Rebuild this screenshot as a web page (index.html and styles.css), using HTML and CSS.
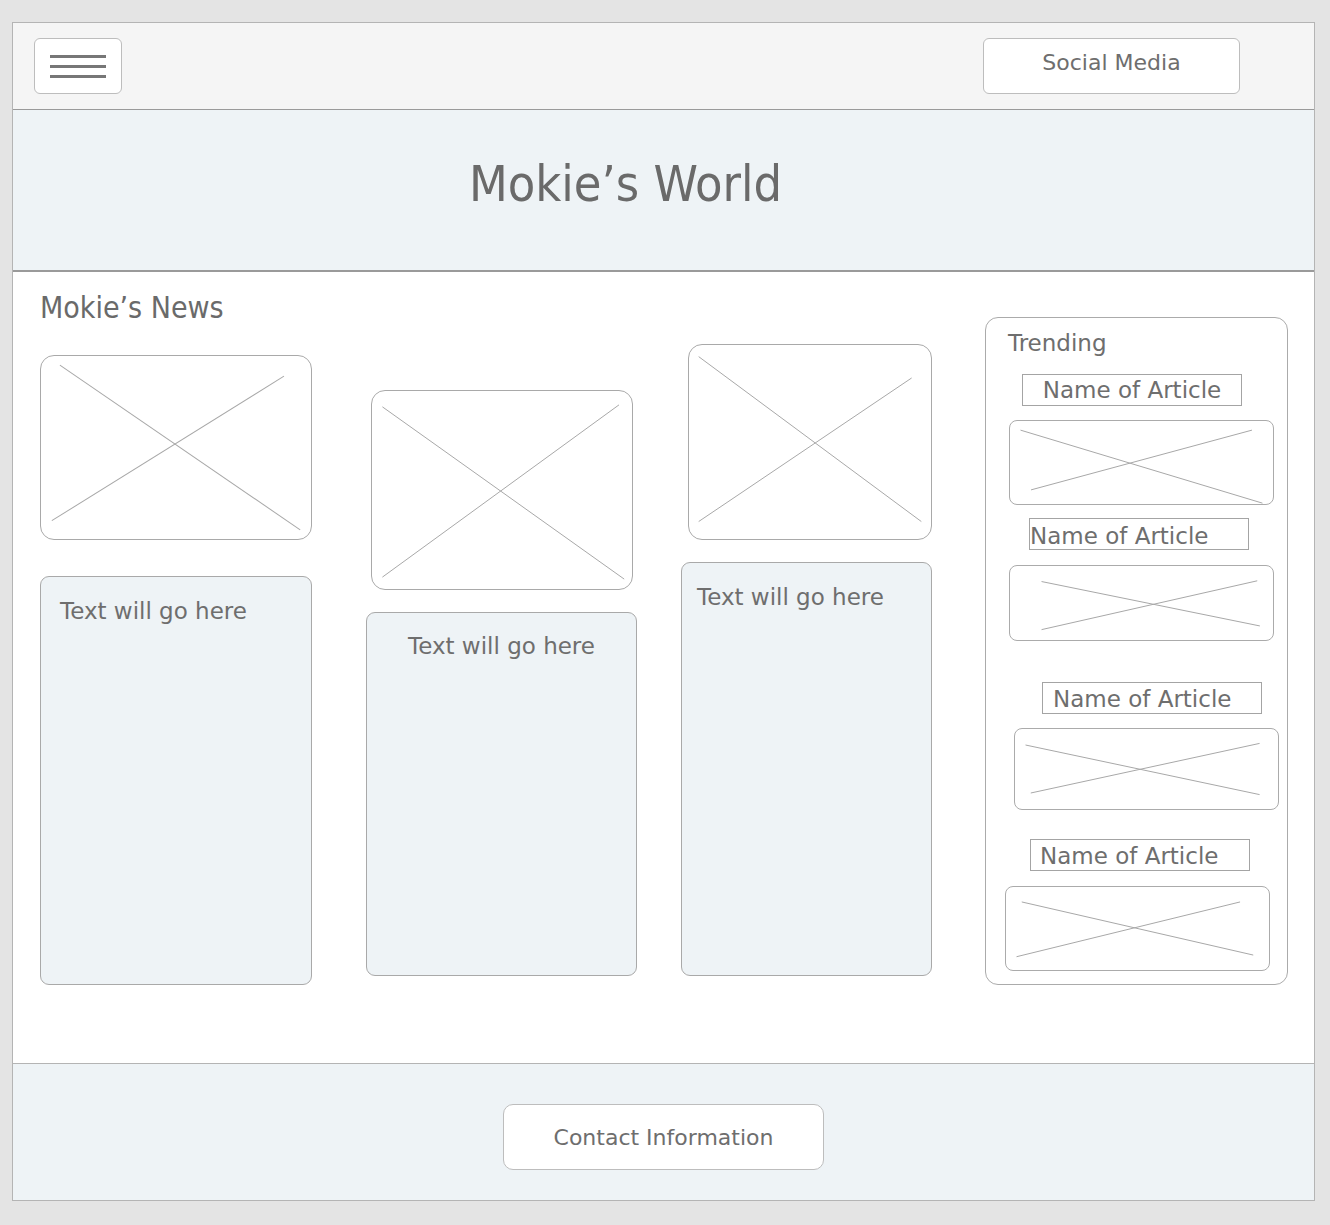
FILE: index.html
```html
<!DOCTYPE html>
<html lang="en">
<head>
<meta charset="utf-8">
<title>Mokie's World</title>
<link rel="stylesheet" href="styles.css">
</head>
<body>
<div class="frame">
  <header class="topbar">
    <button class="menu-btn" aria-label="Menu">
      <span class="bar"></span><span class="bar"></span><span class="bar"></span>
    </button>
    <button class="pill-btn social">Social Media</button>
  </header>
  <section class="banner">
    <h1 class="title">Mokie’s World</h1>
  </section>
  <main class="main">
    <h2 class="section-title">Mokie’s News</h2>
    <div class="row">
      <div class="col col-1">
        <div class="ph ph-1"><svg viewBox="0 0 100 100" preserveAspectRatio="none"><line x1="7" y1="5" x2="96" y2="95"/><line x1="90" y1="11" x2="4" y2="90"/></svg></div>
        <div class="textbox tb-1"><p class="tb-text">Text will go here</p></div>
      </div>
      <div class="col col-2">
        <div class="ph ph-2"><svg viewBox="0 0 100 100" preserveAspectRatio="none"><line x1="4" y1="8" x2="97" y2="95"/><line x1="95" y1="7" x2="4" y2="94"/></svg></div>
        <div class="textbox tb-2"><p class="tb-text centered">Text will go here</p></div>
      </div>
      <div class="col col-3">
        <div class="ph ph-3"><svg viewBox="0 0 100 100" preserveAspectRatio="none"><line x1="4" y1="6" x2="96" y2="91"/><line x1="92" y1="17" x2="4" y2="91"/></svg></div>
        <div class="textbox tb-3"><p class="tb-text">Text will go here</p></div>
      </div>
      <aside class="trending">
        <h3 class="trend-title">Trending</h3>
        <div class="name n-1">Name of Article</div>
        <div class="thumb t-1"><svg viewBox="0 0 100 100" preserveAspectRatio="none"><line x1="4" y1="11" x2="96" y2="99"/><line x1="92" y1="11" x2="8" y2="83"/></svg></div>
        <div class="name n-2">Name of Article</div>
        <div class="thumb t-2"><svg viewBox="0 0 100 100" preserveAspectRatio="none"><line x1="12" y1="21" x2="95" y2="81"/><line x1="94" y1="20" x2="12" y2="86"/></svg></div>
        <div class="name n-3">Name of Article</div>
        <div class="thumb t-3"><svg viewBox="0 0 100 100" preserveAspectRatio="none"><line x1="4" y1="20" x2="93" y2="82"/><line x1="93" y1="18" x2="6" y2="80"/></svg></div>
        <div class="name n-4">Name of Article</div>
        <div class="thumb t-4"><svg viewBox="0 0 100 100" preserveAspectRatio="none"><line x1="6" y1="18" x2="94" y2="82"/><line x1="89" y1="18" x2="4" y2="84"/></svg></div>
      </aside>
    </div>
  </main>
  <footer class="footer">
    <button class="pill-btn contact">Contact Information</button>
  </footer>
</div>
</body>
</html>
```
FILE: styles.css
```css
* { box-sizing: border-box; }

html, body {
  margin: 0;
  padding: 0;
}

body {
  background: #e4e4e4;
  font-family: "DejaVu Sans", sans-serif;
  color: #6e6e6e;
  width: 1330px;
  height: 1225px;
  overflow: hidden;
}

.frame {
  margin: 22px 0 0 12px;
  width: 1303px;
  border: 1px solid #b4b4b4;
  background: #ffffff;
}

/* Top bar */
.topbar {
  height: 87px;
  background: #f5f5f5;
  border-bottom: 1px solid #9a9a9a;
  display: flex;
  align-items: flex-start;
  justify-content: space-between;
  padding: 15px 74px 0 21px;
}

.menu-btn {
  width: 88px;
  height: 56px;
  background: #ffffff;
  border: 1px solid #bdbdbd;
  border-radius: 6px;
  display: flex;
  flex-direction: column;
  align-items: center;
  justify-content: center;
  gap: 7px;
  padding: 0;
}

.bar {
  display: block;
  width: 56px;
  height: 3px;
  background: #777777;
}

.pill-btn {
  font-family: inherit;
  color: #6e6e6e;
  background: #ffffff;
  border: 1px solid #bdbdbd;
  border-radius: 6px;
  font-size: 22px;
  padding: 0;
}

.social {
  width: 257px;
  height: 56px;
  padding-bottom: 7px;
}

/* Banner */
.banner {
  height: 162px;
  background: #eef3f6;
  border-bottom: 2px solid #9a9a9a;
  display: flex;
  align-items: center;
  justify-content: center;
  padding-right: 76px;
}

.title {
  margin: 0;
  font-family: "DejaVu Sans Condensed", "DejaVu Sans", sans-serif;
  font-stretch: condensed;
  font-weight: normal;
  font-size: 50px;
  color: #6a6a6a;
  padding-bottom: 12px;
}

/* Main */
.main {
  height: 792px;
  padding: 18px 0 0 27px;
  border-bottom: 1px solid #b4b4b4;
}

.section-title {
  margin: 0;
  font-family: "DejaVu Sans Condensed", "DejaVu Sans", sans-serif;
  font-stretch: condensed;
  font-weight: normal;
  font-size: 30px;
  line-height: 36px;
  color: #6a6a6a;
}

.row {
  display: flex;
  align-items: flex-start;
  margin-top: -9px;
}

.col {
  display: flex;
  flex-direction: column;
}

.col-1 { width: 272px; margin-top: 38px; gap: 36px; }
.col-2 { width: 272px; margin-top: 73px; margin-left: 54px; gap: 22px; }
.col-3 { width: 251px; margin-top: 27px; margin-left: 43px; gap: 22px; }

.ph {
  border: 1px solid #a9a9a9;
  border-radius: 14px;
  background: #ffffff;
  overflow: hidden;
}

.ph svg, .thumb svg {
  display: block;
  width: 100%;
  height: 100%;
}

.ph line, .thumb line {
  stroke: #a8a8a8;
  stroke-width: 1;
  vector-effect: non-scaling-stroke;
}

.ph-1 { height: 185px; }
.ph-2 { height: 200px; width: 262px; margin-left: 5px; }
.ph-3 { height: 196px; width: 244px; margin-left: 7px; }

.textbox {
  background: #eef3f6;
  border: 1px solid #a9a9a9;
  border-radius: 9px;
}

.tb-1 { height: 409px; }
.tb-2 { height: 364px; width: 271px; }
.tb-3 { height: 414px; }

.tb-text {
  margin: 0;
  font-size: 23px;
  line-height: 30px;
  padding: 19px 0 0 19px;
}

.tb-3 .tb-text { padding: 19px 0 0 15px; }

.tb-text.centered {
  text-align: center;
  padding: 18px 0 0 0;
}

/* Trending */
.trending {
  width: 303px;
  height: 668px;
  margin-left: 53px;
  border: 1px solid #ababab;
  border-radius: 13px;
  background: #ffffff;
  padding: 10px 0 0 0;
  display: flex;
  flex-direction: column;
  align-items: flex-start;
}

.trend-title {
  margin: 0 0 0 22px;
  font-weight: normal;
  font-size: 23px;
  line-height: 30px;
}

.name {
  width: 220px;
  height: 32px;
  border: 1px solid #a4a4a4;
  font-size: 23px;
  line-height: 32px;
  white-space: nowrap;
}

.n-1 { margin: 16px 0 0 36px; text-align: center; line-height: 31px; }
.n-2 { margin: 13px 0 0 43px; padding-left: 0; line-height: 34px; }
.n-3 { margin: 41px 0 0 56px; padding-left: 10px; }
.n-4 { margin: 29px 0 0 44px; padding-left: 9px; }

.thumb {
  width: 265px;
  border: 1px solid #ababab;
  border-radius: 8px;
  background: #ffffff;
  overflow: hidden;
}

.t-1 { height: 85px; margin: 14px 0 0 23px; }
.t-2 { height: 76px; margin: 15px 0 0 23px; }
.t-3 { height: 82px; margin: 14px 0 0 28px; }
.t-4 { height: 85px; margin: 15px 0 0 19px; }

/* Footer */
.footer {
  height: 136px;
  background: #eef3f6;
  display: flex;
  justify-content: center;
  padding-top: 40px;
}

.contact {
  width: 321px;
  height: 66px;
  border-radius: 10px;
  padding-bottom: 0;
}
```
